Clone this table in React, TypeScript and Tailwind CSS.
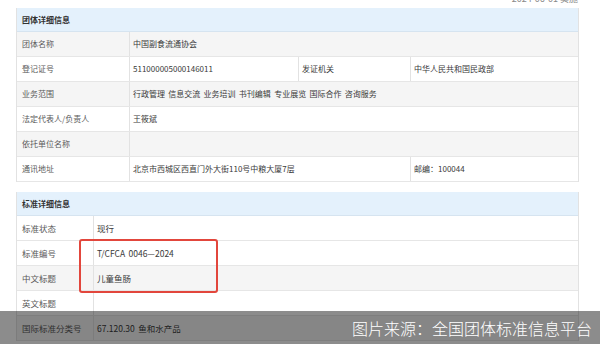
import React from "react";

const font = { fontFamily: '"Noto Sans CJK SC", "Noto Sans", sans-serif' };

type Cell = { text: string; w?: string };

function Row({ cells, gray, labelW, fs }: { cells: Cell[]; gray?: boolean; labelW: string; fs: string }) {
  return (
    <div className={`flex h-[25px] border-b border-[#e6e6e6] ${gray ? "bg-[#f5f5f5]" : "bg-white"}`}>
      {cells.map((c, i) => (
        <div
          key={i}
          className={`flex items-center ${i === 0 ? `${labelW} shrink-0 pl-[5px] text-[#5a5a5a]` : "pl-[3px] text-[#3a3a3a]"} ${
            c.w ? `${c.w} shrink-0` : i === 0 ? "" : "flex-1"
          } ${i < cells.length - 1 ? "border-r border-[#e2e2e2]" : ""} ${fs} whitespace-nowrap [word-spacing:1.5px]`}
        >
          {c.text}
        </div>
      ))}
    </div>
  );
}

export default function App() {
  return (
    <div className="relative w-[600px] h-[344px] overflow-hidden bg-white" style={font}>
      <div className="absolute top-[-8px] right-[22px] text-[9px] text-[#888]">2024-06-01 实施</div>

      <div className="ml-[16px] mr-[21px] pt-[8px]">
        <div className="border-l border-r border-[#e2e2e2]">
          <div className="h-[24px] bg-[#e4f1fc] border-b border-[#d6e4f0] flex items-center pl-[5px] text-[8px] font-bold text-[#333]">
            团体详细信息
          </div>
          <Row labelW="w-[113px]" fs="text-[8px]" gray cells={[{ text: "团体名称" }, { text: "中国副食流通协会" }]} />
          <Row
            labelW="w-[113px]"
            fs="text-[8px]"
            cells={[
              { text: "登记证号" },
              { text: "511000005000146011", w: "w-[169px]" },
              { text: "发证机关", w: "w-[112px]" },
              { text: "中华人民共和国民政部" },
            ]}
          />
          <Row
            labelW="w-[113px]"
            fs="text-[8px]"
            gray
            cells={[{ text: "业务范围" }, { text: "行政管理 信息交流 业务培训 书刊编辑 专业展览 国际合作 咨询服务" }]}
          />
          <Row labelW="w-[113px]" fs="text-[8px]" cells={[{ text: "法定代表人/负责人" }, { text: "王筱斌" }]} />
          <Row labelW="w-[113px]" fs="text-[8px]" gray cells={[{ text: "依托单位名称" }, { text: "" }]} />
          <Row
            labelW="w-[113px]"
            fs="text-[8px]"
            cells={[
              { text: "通讯地址" },
              { text: "北京市西城区西直门外大街110号中粮大厦7层", w: "w-[281px]" },
              { text: "邮编：100044" },
            ]}
          />
        </div>

        <div className="mt-[10px] border-l border-r border-[#e2e2e2]">
          <div className="h-[24px] bg-[#e4f1fc] border-b border-[#d6e4f0] flex items-center pl-[5px] text-[8px] font-bold text-[#333]">
            标准详细信息
          </div>
          <Row labelW="w-[77px]" fs="text-[8.5px]" cells={[{ text: "标准状态" }, { text: "现行" }]} />
          <Row labelW="w-[77px]" fs="text-[8.5px]" cells={[{ text: "标准编号" }, { text: "T/CFCA 0046—2024" }]} />
          <Row labelW="w-[77px]" fs="text-[8.5px]" gray cells={[{ text: "中文标题" }, { text: "儿童鱼肠" }]} />
          <Row labelW="w-[77px]" fs="text-[8.5px]" cells={[{ text: "英文标题" }, { text: "" }]} />
          <Row labelW="w-[77px]" fs="text-[8.5px]" gray cells={[{ text: "国际标准分类号" }, { text: "67.120.30 鱼和水产品" }]} />
        </div>
      </div>

      <div className="absolute left-[79px] top-[239px] w-[139px] h-[54px] border-2 border-[#e2463c] rounded-[3px]" />

      <div className="absolute left-0 right-0 bottom-0 h-[33px] bg-black/45 flex items-center justify-end pr-[8px]">
        <span className="text-white text-[16px] leading-none font-light">图片来源：全国团体标准信息平台</span>
      </div>
    </div>
  );
}
